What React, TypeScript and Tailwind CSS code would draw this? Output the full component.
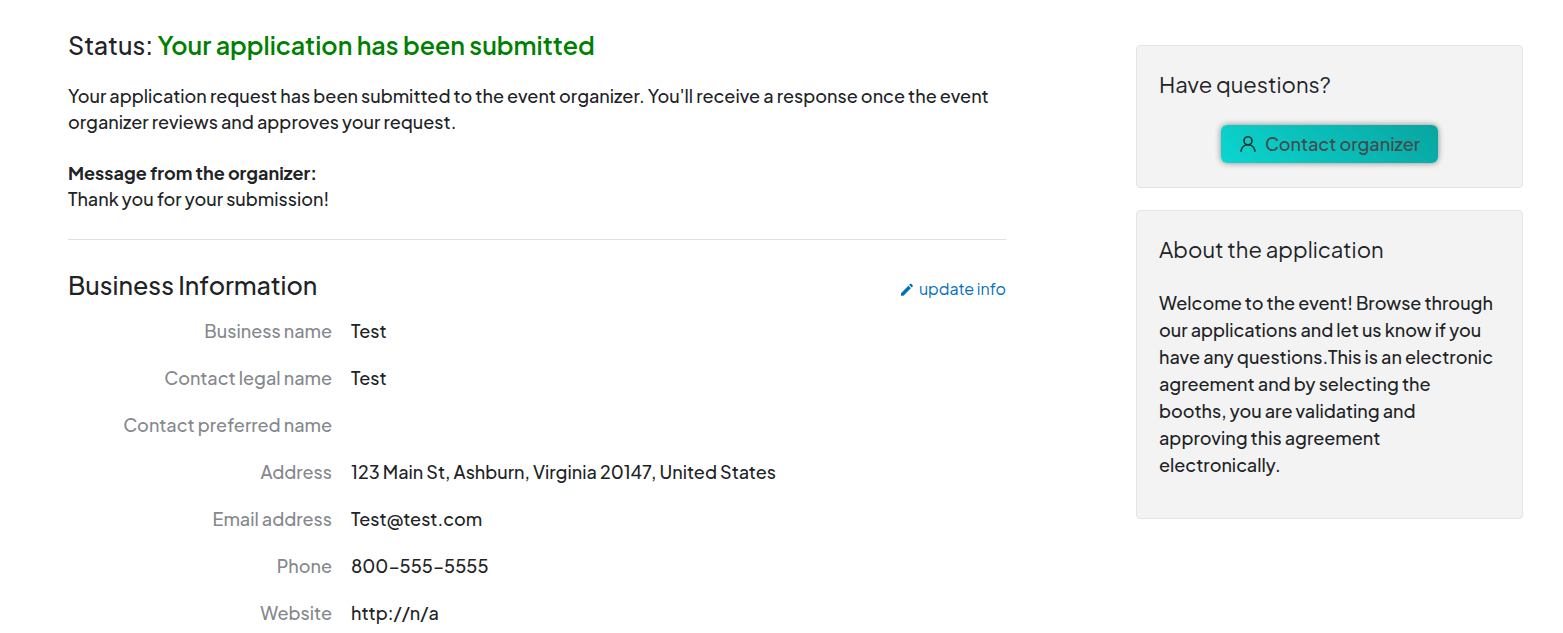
const details = [
  { label: "Business name", value: "Test" },
  { label: "Contact legal name", value: "Test" },
  { label: "Contact preferred name", value: "" },
  { label: "Address", value: "123 Main St, Ashburn, Virginia 20147, United States" },
  { label: "Email address", value: "Test@test.com" },
  { label: "Phone", value: "800-555-5555" },
  { label: "Website", value: "http://n/a" },
];

function PersonIcon() {
  return (
    <svg aria-hidden="true" viewBox="0 0 18 18" className="h-[18px] w-[18px] shrink-0" fill="none" stroke="#1b2a2a" strokeWidth="1.6" strokeLinecap="round">
      <circle cx="9" cy="5.8" r="4" />
      <path d="M2 16.2C2.4 12.4 5.2 9.8 9 9.8s6.6 2.6 7 6.4" />
    </svg>
  );
}

function PencilIcon() {
  return (
    <svg aria-hidden="true" viewBox="0 0 24 24" className="h-4 w-4 shrink-0" fill="currentColor">
      <path d="M3 18.25V22h3.75L17.81 10.94l-3.75-3.75L3 18.25zM20.71 8.04a1 1 0 0 0 0-1.41l-2.34-2.34a1 1 0 0 0-1.41 0l-1.83 1.83 3.75 3.75 1.83-1.83z" />
    </svg>
  );
}

function ApplicationStatus() {
  return (
    <section className="border-b border-[#dee0e2] pb-[27px]">
      <h1 className="text-[25px] leading-8">
        Status: <span className="font-semibold text-[#008000]">Your application has been submitted</span>
      </h1>
      <p className="mt-[22px]">
        Your application request has been submitted to the event organizer. You'll receive a response once the event organizer reviews and approves your request.
      </p>
      <p className="mt-[25px] font-bold">Message from the organizer:</p>
      <p>Thank you for your submission!</p>
    </section>
  );
}

function BusinessInformation() {
  return (
    <section className="pt-[29px]">
      <div className="flex items-center justify-between">
        <h2 className="text-[25px] leading-8">Business Information</h2>
        <a href="#update" className="flex items-center gap-1 pt-2 text-base font-normal leading-6 text-[#0270bb] hover:underline">
          <PencilIcon />
          update info
        </a>
      </div>
      <dl className="mt-4 space-y-5 leading-[27px]">
        {details.map(({ label, value }) => (
          <div key={label} className="grid grid-cols-[264px_1fr] gap-[19px]">
            <dt className="text-right text-[#85888d]">{label}</dt>
            <dd>{value}</dd>
          </div>
        ))}
      </dl>
    </section>
  );
}

function Sidebar() {
  return (
    <aside className="flex flex-col gap-[22px] pt-4">
      <section className="rounded border border-[#e4e4e4] bg-[#f3f3f3] px-[22px] pt-[22px] pb-6">
        <h2 className="text-[22px] leading-8 font-normal">Have questions?</h2>
        <div className="mt-[25px] flex justify-center">
          <button type="button" className="flex h-[38px] items-center gap-2 rounded-md bg-linear-[45deg,#0cd5d0,#08a5a0] px-[18px] text-[#45494b] shadow-[0_0_6px_rgba(0,0,0,0.45)]">
            <PersonIcon />
            Contact organizer
          </button>
        </div>
      </section>
      <section className="rounded border border-[#e4e4e4] bg-[#f3f3f3] px-[22px] pt-[22px] pb-10">
        <h2 className="text-[22px] leading-8 font-normal">About the application</h2>
        <p className="mt-6 leading-[27px]">
          Welcome to the event! Browse through our applications and let us know if you have any questions.This is an electronic agreement and by selecting the booths, you are validating and approving this agreement electronically.
        </p>
      </section>
    </aside>
  );
}

export default function App() {
  return (
    <div className="bg-white pt-[29px] pr-10 pl-[68px] font-['Plus_Jakarta_Sans','Inter',sans-serif] text-lg leading-[26px] font-medium text-[#212326]">
      <div className="grid grid-cols-[1fr_387px] gap-[130px]">
        <main>
          <ApplicationStatus />
          <BusinessInformation />
        </main>
        <Sidebar />
      </div>
    </div>
  );
}
